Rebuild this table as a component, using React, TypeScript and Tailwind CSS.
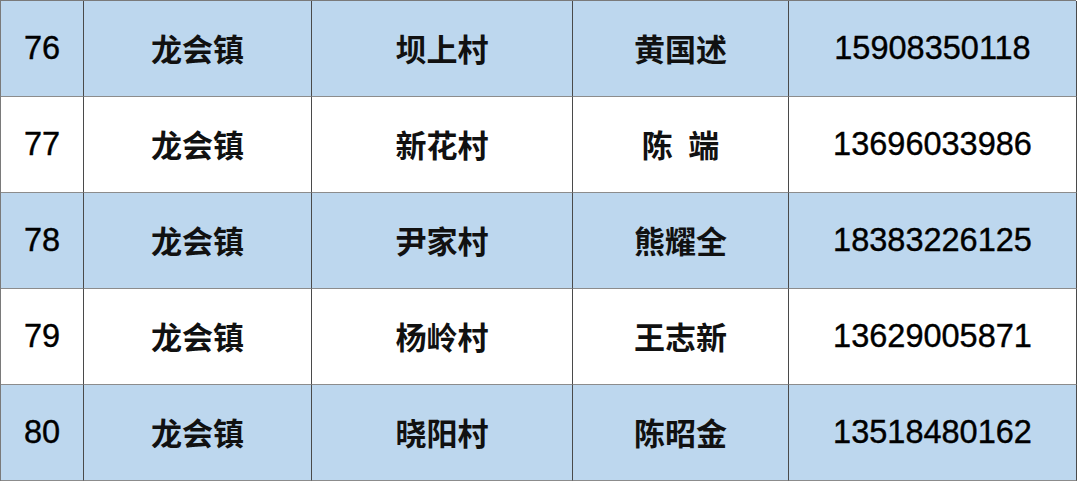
import React from "react";

const rows = [
  ["76", "龙会镇", "坝上村", "黄国述", "15908350118"],
  ["77", "龙会镇", "新花村", "陈\u2002端", "13696033986"],
  ["78", "龙会镇", "尹家村", "熊耀全", "18383226125"],
  ["79", "龙会镇", "杨岭村", "王志新", "13629005871"],
  ["80", "龙会镇", "晓阳村", "陈昭金", "13518480162"],
];

export default function App() {
  return (
    <div className="w-[1080px] h-[483px] bg-white overflow-hidden">
      <div className="w-[1076px] border-t border-l border-[#7a7a7a] grid grid-cols-[83px_228px_261px_216px_288px]">
        {rows.map((r, i) => {
          const bg = i % 2 === 0 ? "bg-[#bdd7ee]" : "bg-white";
          return r.map((c, j) => {
            const isNum = j === 0 || j === 4;
            return (
              <div
                key={`${i}-${j}`}
                className={`${bg} h-[96px] border-b border-r border-b-[#8c8c8c] border-r-[#4a4a4a] flex items-center justify-center whitespace-pre ${
                  isNum
                    ? "text-[32.5px] text-black [-webkit-text-stroke:0.4px_#000] font-['Liberation_Sans',Arial,sans-serif]"
                    : "text-[31px] text-[#111] font-bold font-['Noto_Sans_CJK_SC',sans-serif]"
                }`}
              >
                {c}
              </div>
            );
          });
        })}
      </div>
    </div>
  );
}
